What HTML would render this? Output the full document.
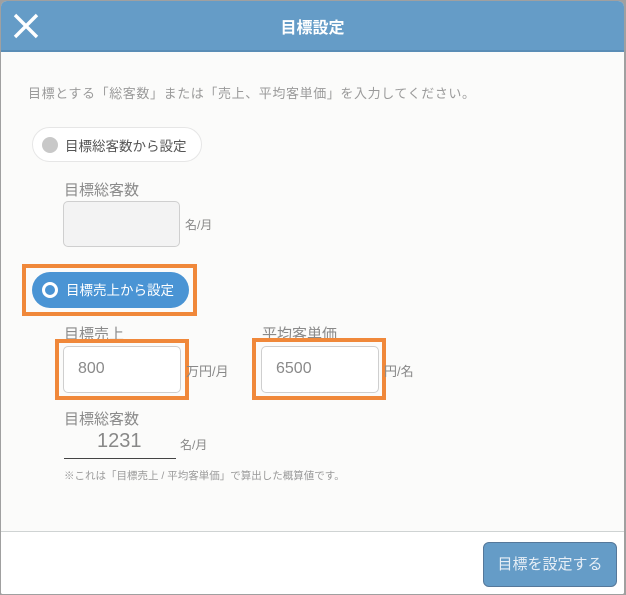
<!DOCTYPE html>
<html><head><meta charset="utf-8"><style>
*{margin:0;padding:0;box-sizing:border-box}
body{width:626px;height:595px;background:#a0a0a0;position:relative;overflow:hidden;font-family:"Liberation Sans","Noto Sans CJK JP",sans-serif}
.win{position:absolute;left:1px;top:1px;width:623px;height:593px;background:#fbfbfa;border-radius:6px 6px 2px 2px;overflow:hidden}
.hd{position:absolute;left:0;top:0;width:100%;height:51px;background:#659cc7;border-bottom:2px solid #5a8db6}
.hd .t{position:absolute;left:0;right:0;top:13px;text-align:center;color:#fff;font-size:16px;font-weight:bold}
.a{position:absolute}
.g{color:#999}
.lbl{font-size:15px;color:#8a8a8a}
.box{position:absolute;border:1px solid #cfcfcf;border-radius:5px;background:#fff;font-size:16px;color:#8a8a8a;padding-left:14px;line-height:44px}
.or{position:absolute;border:4px solid #f0883a}
.ft{position:absolute;left:0;top:530px;width:100%;height:63px;background:#fff;border-top:1px solid #cfd3d3}
</style></head><body>
<div class="win">
<div class="hd">
<svg class="a" style="left:12px;top:12px" width="26" height="26"><path d="M2 2L24 24M24 2L2 24" stroke="#fff" stroke-width="3.4"/></svg>
<div class="t">目標設定</div>
</div>
<div class="a g" style="left:27px;top:82px;font-size:13px;letter-spacing:0.6px;color:#9a9a9a">目標とする「総客数」または「売上、平均客単価」を入力してください。</div>
<div class="a" style="left:31px;top:126px;width:170px;height:35px;border:1px solid #e6e6e6;border-radius:18px;background:#fff"></div>
<div class="a" style="left:41px;top:136px;width:16px;height:16px;border-radius:50%;background:#c8c8c8"></div>
<div class="a" style="left:64px;top:134px;font-size:13.5px;color:#555">目標総客数から設定</div>
<div class="a lbl" style="left:63px;top:178px">目標総客数</div>
<div class="box" style="left:62px;top:200px;width:117px;height:46px;background:#f3f3f3"></div>
<div class="a" style="left:184px;top:215px;font-size:12px;color:#888">名/月</div>

<div class="or" style="left:21px;top:263px;width:175px;height:52px"></div>
<div class="a" style="left:31px;top:271px;width:157px;height:36px;border-radius:18px;background:#4a94d4"></div>
<div class="a" style="left:41px;top:281px;width:16px;height:16px;border-radius:50%;border:3px solid #fff"></div>
<div class="a" style="left:65px;top:278px;font-size:13.5px;color:#fff">目標売上から設定</div>

<div class="a lbl" style="left:63px;top:322px">目標売上</div>
<div class="a lbl" style="left:261px;top:322px">平均客単価</div>
<div class="or" style="left:54px;top:338px;width:134px;height:61px"></div>
<div class="box" style="left:62px;top:345px;width:118px;height:47px">800</div>
<div class="a" style="left:185px;top:360px;font-size:13px;color:#888">万円/月</div>
<div class="or" style="left:251px;top:337px;width:134px;height:62px"></div>
<div class="box" style="left:260px;top:345px;width:118px;height:47px">6500</div>
<div class="a" style="left:383px;top:360px;font-size:13px;color:#888">円/名</div>

<div class="a lbl" style="left:63px;top:407px">目標総客数</div>
<div class="a" style="left:96px;top:429px;font-size:20px;color:#888">1231</div>
<div class="a" style="left:63px;top:457px;width:112px;height:1px;background:#444"></div>
<div class="a" style="left:179px;top:435px;font-size:12px;color:#888">名/月</div>
<div class="a" style="left:63px;top:467px;font-size:10.5px;color:#999">※これは「目標売上 / 平均客単価」で算出した概算値です。</div>

<div class="ft"><div class="a" style="left:482px;top:10px;width:134px;height:45px;background:#659cc7;border:1px solid #55789a;border-radius:6px;color:#e6eef6;font-size:15px;text-align:center;line-height:43px">目標を設定する</div></div>
</div>
</body></html>
